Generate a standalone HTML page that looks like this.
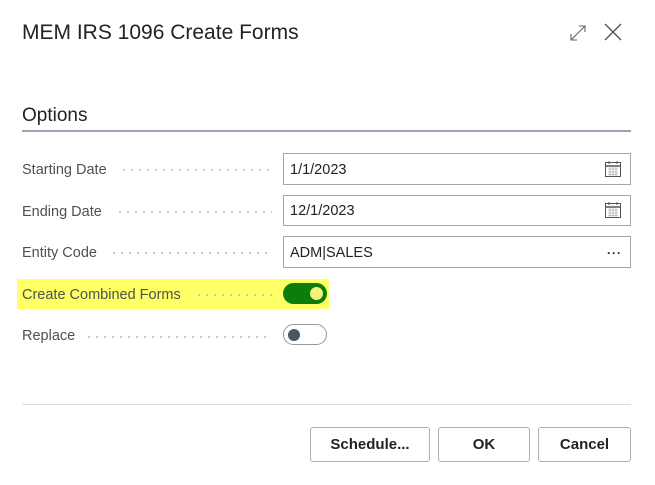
<!DOCTYPE html><html><head><style>
body{margin:0;width:655px;height:485px;background:#fff;font-family:"Liberation Sans",sans-serif;position:relative;overflow:hidden}
.a{position:absolute}
.lbl{position:absolute;left:22px;font-size:14.5px;color:#505050}
.dots{position:absolute;height:2px;background-image:radial-gradient(circle,#bbb 0.8px,transparent 1px);background-size:8px 2px;background-repeat:repeat-x}
.inp{position:absolute;left:283px;width:348px;border:1px solid #a6a6a6;font-size:14.5px;color:#222;box-sizing:border-box}
.btn{position:absolute;top:427px;height:35px;border:1px solid #b0b0b0;border-radius:3px;box-sizing:border-box;font-size:15px;font-weight:bold;color:#222;text-align:center;line-height:33px;background:#fff}
</style></head><body>
<div class="a" style="left:22px;top:21px;font-size:21px;color:#222">MEM IRS 1096 Create Forms</div>
<svg class="a" style="left:568px;top:23px" width="20" height="20" viewBox="0 0 20 20"><path d="M3 17L17 3M11 3h6v6M3 11v6h6" stroke="#666" stroke-width="1.1" fill="none"/></svg>
<svg class="a" style="left:603px;top:22px" width="20" height="20" viewBox="0 0 20 20"><path d="M2 2L18 18M18 2L2 18" stroke="#555" stroke-width="1.4"/></svg>
<div class="a" style="left:22px;top:105px;font-size:19px;color:#222">Options</div>
<div class="a" style="left:22px;top:130px;width:609px;height:2px;background:#9aa3b2"></div>

<div class="lbl" style="top:162px">Starting Date</div><div class="dots" style="left:120px;width:152px;top:169px"></div>
<div class="inp" style="top:153px;height:32px;padding:8px 6px">1/1/2023</div>
<div class="lbl" style="top:204px">Ending Date</div><div class="dots" style="left:116px;width:156px;top:211px"></div>
<div class="inp" style="top:195px;height:31px;padding:7px 6px">12/1/2023</div>
<svg class="a" style="left:604px;top:160px" width="18" height="18" viewBox="0 0 18 18"><rect x="1.5" y="2.5" width="15" height="14" fill="none" stroke="#555"/><path d="M1.5 6h15" stroke="#555" stroke-width="1.5"/><path d="M5 1v3M13 1v3" stroke="#555"/><path d="M4 9h10M4 12h10M4 14.5h10M6 7v9M9 7v9M12 7v9" stroke="#999" stroke-width=".6"/></svg>
<svg class="a" style="left:604px;top:201px" width="18" height="18" viewBox="0 0 18 18"><rect x="1.5" y="2.5" width="15" height="14" fill="none" stroke="#555"/><path d="M1.5 6h15" stroke="#555" stroke-width="1.5"/><path d="M5 1v3M13 1v3" stroke="#555"/><path d="M4 9h10M4 12h10M4 14.5h10M6 7v9M9 7v9M12 7v9" stroke="#999" stroke-width=".6"/></svg>
<div class="lbl" style="top:245px">Entity Code</div><div class="dots" style="left:110px;width:162px;top:252px"></div>
<div class="inp" style="top:236px;height:32px;padding:8px 6px">ADM|SALES<span style="position:absolute;right:8px;top:9px;font-size:12px;letter-spacing:1px;font-weight:bold">···</span></div>

<div class="a" style="left:17px;top:279px;width:312px;height:30px;background:#ffff66"></div>
<div class="lbl" style="top:287px">Create Combined Forms</div><div class="dots" style="left:195px;width:77px;top:294px"></div>
<div class="a" style="left:283px;top:283px;width:44px;height:21px;border-radius:11px;background:#0a7d0a"></div>
<div class="a" style="left:310px;top:287px;width:13px;height:13px;border-radius:50%;background:#f4f07a"></div>
<div class="lbl" style="top:328px">Replace</div><div class="dots" style="left:85px;width:187px;top:336px"></div>
<div class="a" style="left:283px;top:324px;width:44px;height:21px;border-radius:11px;border:1px solid #999;box-sizing:border-box"></div>
<div class="a" style="left:288px;top:329px;width:12px;height:12px;border-radius:50%;background:#4c5467"></div>

<div class="a" style="left:22px;top:404px;width:609px;height:1px;background:#ddd"></div>
<div class="btn" style="left:310px;width:120px">Schedule...</div>
<div class="btn" style="left:438px;width:92px">OK</div>
<div class="btn" style="left:538px;width:93px">Cancel</div>
</body></html>
